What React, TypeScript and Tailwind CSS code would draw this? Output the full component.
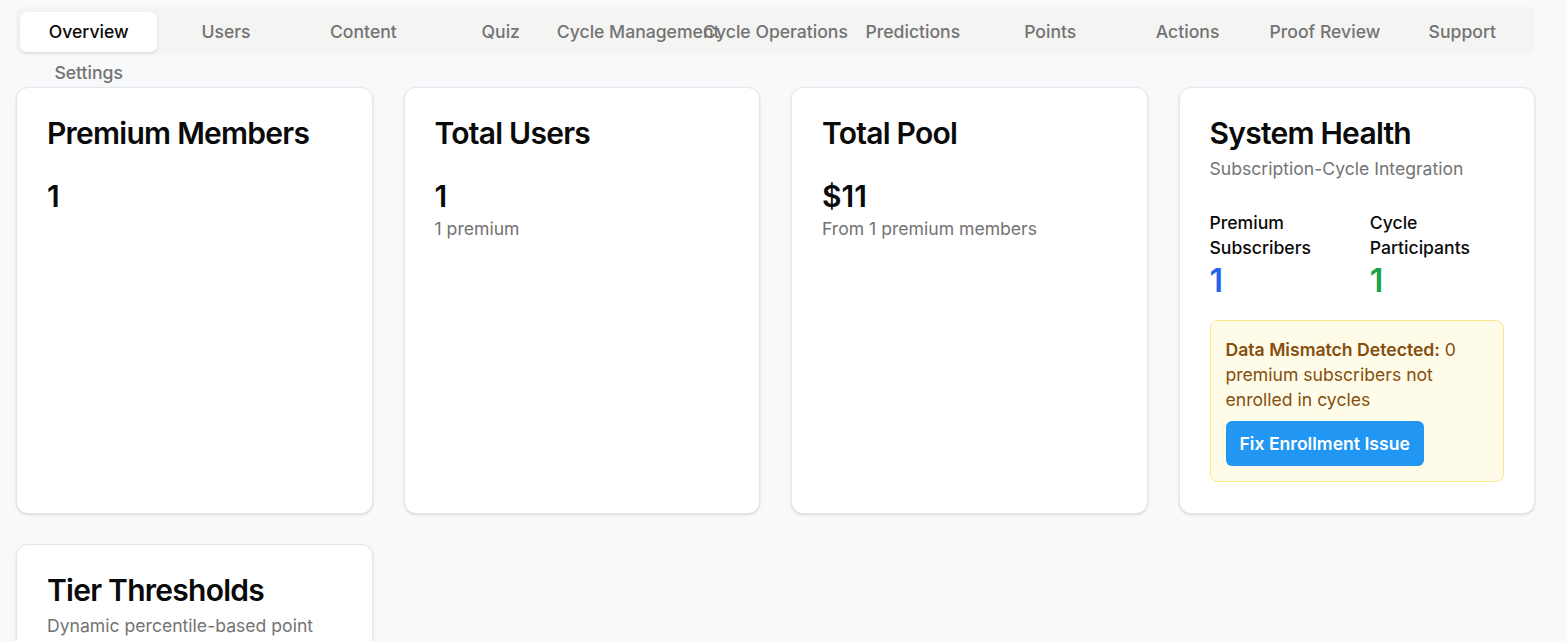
import React from "react";

const tabs = [
  "Overview",
  "Users",
  "Content",
  "Quiz",
  "Cycle Management",
  "Cycle Operations",
  "Predictions",
  "Points",
  "Actions",
  "Proof Review",
  "Support",
  "Settings",
];

function Card({ children }: { children: React.ReactNode }) {
  return (
    <div className="rounded-xl border border-[#e5e7eb] bg-white px-[30px] pt-[26px] pb-[31px] shadow-sm">
      {children}
    </div>
  );
}

function CardTitle({ children }: { children: React.ReactNode }) {
  return (
    <h2 className="text-[30px] font-semibold leading-[38px] tracking-tight text-[#0a0a0a]">
      {children}
    </h2>
  );
}

function StatCard({
  title,
  value,
  note,
}: {
  title: string;
  value: string;
  note?: string;
}) {
  return (
    <Card>
      <CardTitle>{title}</CardTitle>
      <div className="mt-[26px] text-[30px] font-semibold leading-[36px] text-[#0a0a0a]">
        {value}
      </div>
      {note && (
        <p className="mt-[2px] text-[17.6px] leading-[26px] text-[#737373]">{note}</p>
      )}
    </Card>
  );
}

export default function App() {
  return (
    <div
      className="min-h-screen bg-[#f8f9fa] pt-[7px] pl-4 pr-8"
      style={{ fontFamily: "Inter, 'Noto Sans', sans-serif" }}
    >
      <div className="h-[48px] rounded-lg bg-[#f4f4f2] px-[4px] pt-[5px]">
        <div className="grid grid-cols-11">
          {tabs.map((tab, i) => (
            <button
              key={tab}
              className={
                i === 0
                  ? "inline-flex h-[40px] items-center justify-center whitespace-nowrap rounded-md bg-white text-[17.6px] font-medium text-[#0a0a0a] shadow-sm"
                  : "inline-flex h-[41px] items-center justify-center whitespace-nowrap rounded-md text-[17.6px] font-medium text-[#737373]"
              }
            >
              {tab}
            </button>
          ))}
        </div>
      </div>

      <div className="mt-[32px] grid grid-cols-4 gap-x-[31px] gap-y-[30px]">
        <StatCard title="Premium Members" value="1" />
        <StatCard title="Total Users" value="1" note="1 premium" />
        <StatCard title="Total Pool" value="$11" note="From 1 premium members" />

        <Card>
          <CardTitle>System Health</CardTitle>
          <p className="mt-[4px] text-[17.6px] leading-[26px] text-[#737373]">
            Subscription-Cycle Integration
          </p>
          <div className="mt-[28px] grid grid-cols-2 gap-[26px]">
            <div>
              <p className="text-[17.6px] font-medium leading-[25px] text-[#0a0a0a]">
                Premium Subscribers
              </p>
              <p className="mt-[3px] text-[32px] font-semibold leading-[36px] text-[#2563eb]">1</p>
            </div>
            <div>
              <p className="text-[17.6px] font-medium leading-[25px] text-[#0a0a0a]">
                Cycle Participants
              </p>
              <p className="mt-[3px] text-[32px] font-semibold leading-[36px] text-[#16a34a]">1</p>
            </div>
          </div>
          <div className="mt-[21px] rounded-lg border border-[#fde68a] bg-[#fefce8] px-[15px] pt-[16px] pb-[15px] text-[17.6px] leading-[25px] text-[#854d0e]">
            <p>
              <span className="font-semibold">Data Mismatch Detected:</span> 0
              premium subscribers not enrolled in cycles
            </p>
            <button className="mt-[9px] h-[45px] rounded-md bg-[#2196f3] px-[14px] text-[17.6px] font-semibold text-white">
              Fix Enrollment Issue
            </button>
          </div>
        </Card>

        <Card>
          <CardTitle>Tier Thresholds</CardTitle>
          <p className="mt-[4px] text-[17.6px] leading-[26px] text-[#737373]">
            Dynamic percentile-based point thresholds for reward tiers
          </p>
          <div className="h-40" />
        </Card>
      </div>
    </div>
  );
}
